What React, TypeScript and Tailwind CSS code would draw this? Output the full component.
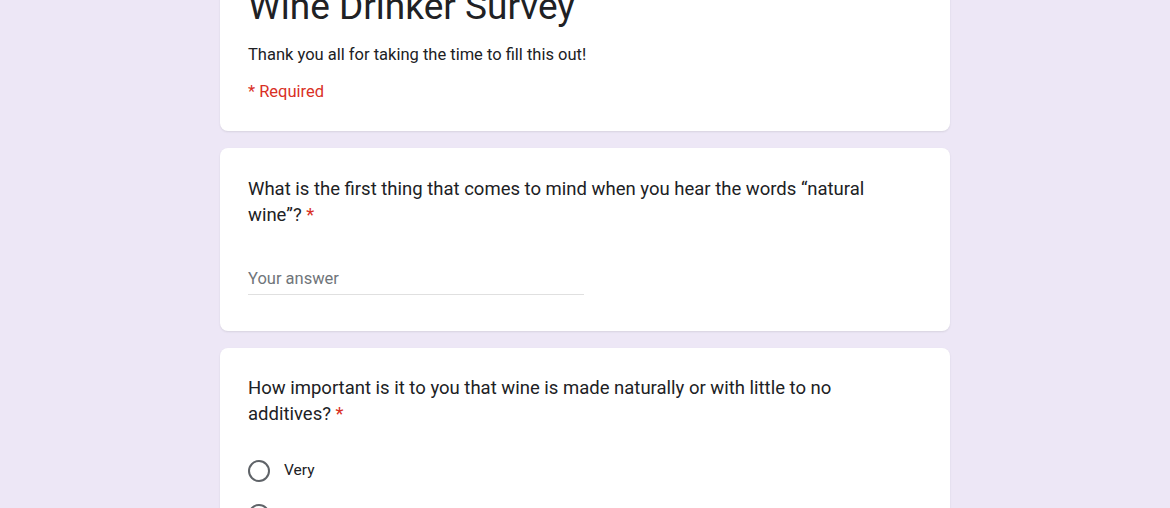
const RadioRow = ({ label }: { label: string }) => (
  <label className="flex h-[44px] items-center gap-[14px]">
    <span className="h-[22px] w-[22px] shrink-0 rounded-full border-2 border-[#5f6368]" />
    <span className="text-[15.5px] text-[#202124]">{label}</span>
  </label>
);

const Card = ({ children, className = "" }: { children: React.ReactNode; className?: string }) => (
  <div className={`rounded-lg bg-white px-7 shadow-[0_1px_2px_rgba(60,64,67,0.12)] ${className}`}>
    {children}
  </div>
);

export default function App() {
  return (
    <div className="h-[508px] w-full overflow-hidden bg-[#ede7f6] font-['Roboto',_'Liberation_Sans',_sans-serif]">
      <div className="mx-auto flex w-[730px] flex-col gap-[17px] -mt-[15px]">
        <Card className="pb-[28px]">
          <h1 className="text-[37px] leading-[44px] text-[#202124] font-normal">
            Wine Drinker Survey
          </h1>
          <p className="mt-[15px] text-[16.5px] leading-[22px] text-[#202124]">
            Thank you all for taking the time to fill this out!
          </p>
          <p className="mt-[15px] text-[16.5px] leading-[22px] text-[#d93025]">* Required</p>
        </Card>

        <Card className="pt-[28px] pb-[36px]">
          <div className="w-[660px] text-[18.5px] leading-[26px] text-[#202124]">
            What is the first thing that comes to mind when you hear the words “natural wine”?{" "}
            <span className="text-[#d93025]">*</span>
          </div>
          <div className="mt-[39px] w-[336px] border-b border-[#e0e0e0] pb-[3px] text-[16.5px] leading-[24px] text-[#70757a]">
            Your answer
          </div>
        </Card>

        <Card className="pt-[27px] pb-6">
          <div className="w-[660px] text-[18.5px] leading-[26px] text-[#202124]">
            How important is it to you that wine is made naturally or with little to no additives?{" "}
            <span className="text-[#d93025]">*</span>
          </div>
          <div className="mt-[22px] flex flex-col">
            <RadioRow label="Very" />
            <RadioRow label="Somewhat" />
            <RadioRow label="Not at all" />
          </div>
        </Card>
      </div>
    </div>
  );
}
